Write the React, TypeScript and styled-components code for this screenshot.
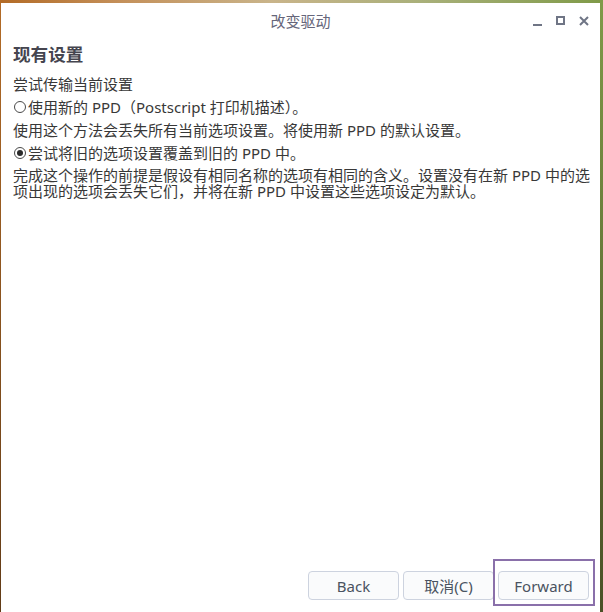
import React from "react";
import styled, { createGlobalStyle } from "styled-components";

const Global = createGlobalStyle`
  html, body { margin: 0; padding: 0; }
  body {
    width: 603px;
    height: 612px;
    overflow: hidden;
    font-family: "Noto Sans", "Noto Sans CJK SC", sans-serif;
  }
`;

const Desktop = styled.div`
  width: 603px;
  height: 612px;
  box-sizing: border-box;
  padding: 3px 3px 0 1px;
  background:
    linear-gradient(180deg, rgba(0,0,0,0) 0%, rgba(30,20,10,0.55) 100%),
    linear-gradient(90deg, #b36b26 0%, #c4905a 20%, #c9b48a 45%, #a9b07a 70%, #7f9a48 100%);
`;

const Window = styled.div`
  width: 599px;
  height: 609px;
  background: #ffffff;
  display: flex;
  flex-direction: column;
`;

const TitleBar = styled.div`
  height: 34px;
  flex: none;
  display: flex;
  align-items: center;
  justify-content: center;
  position: relative;
`;

const Title = styled.div`
  font-size: 15px;
  color: #66667a;
  font-family: "Noto Sans CJK SC", "Noto Sans", sans-serif;
`;

const Controls = styled.div`
  position: absolute;
  right: 11px;
  top: 13px;
  display: flex;
  gap: 13px;
  align-items: flex-start;
`;

const CtrlIcon = styled.svg`
  width: 10px;
  height: 10px;
  display: block;
`;

const Content = styled.div`
  flex: 1;
  display: flex;
  flex-direction: column;
  padding: 6px 11px 12px 12px;
  color: #383838;
  font-size: 15px;
`;

const Heading = styled.div`
  font-size: 17.6px;
  font-weight: 700;
  color: #45454f;
  line-height: 22px;
  margin-bottom: 10px;
`;

const Lines = styled.div`
  display: flex;
  flex-direction: column;
  gap: 5px;
`;

const Line = styled.div`
  line-height: 18px;
  white-space: nowrap;
`;

const RadioRow = styled.div`
  line-height: 18px;
  display: flex;
  align-items: center;
  white-space: nowrap;
`;

const Radio = styled.span<{ $checked?: boolean }>`
  width: 12px;
  height: 12px;
  border: 1px solid #4a4a4a;
  border-radius: 50%;
  box-sizing: border-box;
  margin: 0 2px 0 1px;
  display: inline-flex;
  align-items: center;
  justify-content: center;
  flex: none;
  &::after {
    content: "";
    width: 6px;
    height: 6px;
    border-radius: 50%;
    background: #2a2a2a;
    display: ${(p) => (p.$checked ? "block" : "none")};
  }
`;

const Paragraph = styled.div`
  line-height: 16px;
  margin-top: 0px;
  white-space: nowrap;
`;

const Spacer = styled.div`
  flex: 1;
`;

const ButtonRow = styled.div`
  display: flex;
  justify-content: flex-end;
  gap: 4px;
`;

const Button = styled.button`
  position: relative;
  width: 91px;
  height: 29px;
  box-sizing: border-box;
  border: 1px solid #cdd3df;
  border-radius: 4px;
  background: #fafbfc;
  color: #4a5361;
  font-family: "Noto Sans", "Noto Sans CJK SC", sans-serif;
  font-size: 15px;
  padding: 0;
  display: flex;
  align-items: center;
  justify-content: center;
`;

const FocusRing = styled.span`
  position: absolute;
  left: -6px;
  top: -13px;
  right: -7px;
  bottom: -7px;
  border: 2px solid #8a70aa;
  pointer-events: none;
`;

export default function App() {
  return (
    <>
      <Global />
      <Desktop>
        <Window>
          <TitleBar>
            <Title>改变驱动</Title>
            <Controls>
              <CtrlIcon viewBox="0 0 10 10">
                <rect x="0" y="8" width="9" height="2" fill="#6f7585" />
              </CtrlIcon>
              <CtrlIcon viewBox="0 0 10 10">
                <rect x="1" y="1" width="7" height="7" fill="none" stroke="#6f7585" strokeWidth="2" />
              </CtrlIcon>
              <CtrlIcon viewBox="0 0 10 10">
                <path d="M1 1 L9 9 M9 1 L1 9" stroke="#6f7585" strokeWidth="2" />
              </CtrlIcon>
            </Controls>
          </TitleBar>
          <Content>
            <Heading>现有设置</Heading>
            <Lines>
              <Line>尝试传输当前设置</Line>
              <RadioRow>
                <Radio />
                使用新的 PPD（Postscript 打印机描述）。
              </RadioRow>
              <Line>使用这个方法会丢失所有当前选项设置。将使用新 PPD 的默认设置。</Line>
              <RadioRow>
                <Radio $checked />
                尝试将旧的选项设置覆盖到旧的 PPD 中。
              </RadioRow>
              <Paragraph>
                完成这个操作的前提是假设有相同名称的选项有相同的含义。设置没有在新 PPD 中的选
                <br />
                项出现的选项会丢失它们，并将在新 PPD 中设置这些选项设定为默认。
              </Paragraph>
            </Lines>
            <Spacer />
            <ButtonRow>
              <Button>Back</Button>
              <Button>取消(C)</Button>
              <Button>
                Forward
                <FocusRing />
              </Button>
            </ButtonRow>
          </Content>
        </Window>
      </Desktop>
    </>
  );
}
